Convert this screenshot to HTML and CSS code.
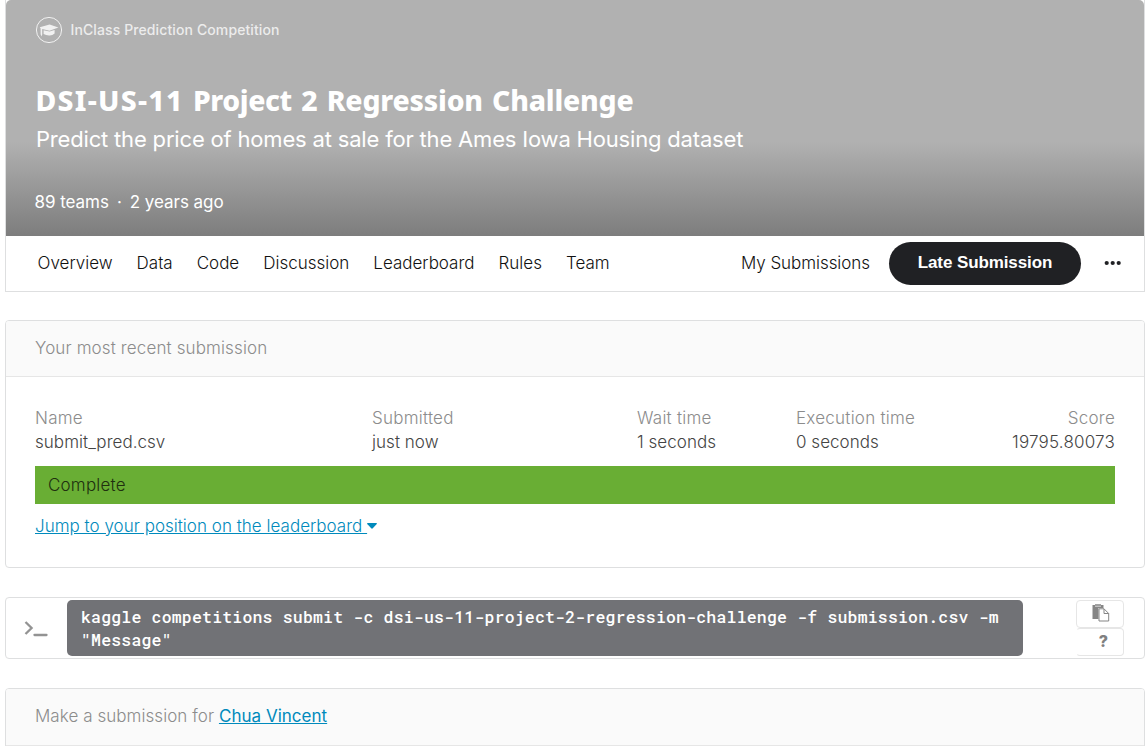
FILE: index.html
```html
<!DOCTYPE html>
<html lang="en">
<head>
<meta charset="utf-8">
<title>DSI-US-11 Project 2 Regression Challenge</title>
<link rel="stylesheet" href="styles.css">
</head>
<body>
<main class="page">
  <section class="competition">
    <header class="hero">
      <div class="kind">
        <svg class="kind-icon" width="28" height="28" viewBox="0 0 28 28"><circle cx="14" cy="14" r="12.6" fill="none" stroke="#f1f1f1"/><path fill="#f1f1f1" d="M14.6 8.4 23.4 11.5 14.5 14.7 7.2 13V18.5L6.6 20.6 5.6 18.2V12.4L4.8 11.2ZM8.6 14.2 14.5 15.5 19.6 13.9V17.4Q17.2 19.7 14 19.4 11 19.3 8.6 18Z"/></svg>
        <span class="kind-label">InClass Prediction Competition</span>
      </div>
      <h1 class="title"><span class="title-code">DSI-US-11</span> <span class="title-word">Project</span> 2 Regression Challenge</h1>
      <p class="subtitle">Predict the price of homes at sale for the Ames Iowa Housing dataset</p>
      <p class="meta"><span>89 teams</span><span class="dot">·</span><span>2 years ago</span></p>
    </header>
    <nav class="tabs">
      <a>Overview</a><a>Data</a><a>Code</a><a>Discussion</a><a>Leaderboard</a><a>Rules</a><a>Team</a>
      <a class="mine">My Submissions</a>
      <button class="late">Late Submission</button>
      <svg class="more" width="18" height="6" viewBox="0 0 18 6" fill="#202124"><circle cx="2.7" cy="3" r="2.1"/><circle cx="8.7" cy="3" r="2.1"/><circle cx="14.7" cy="3" r="2.1"/></svg>
    </nav>
  </section>

  <section class="card">
    <h2 class="card-head">Your most recent submission</h2>
    <div class="card-body">
      <dl class="facts">
        <div><dt>Name</dt><dd>submit_pred.csv</dd></div>
        <div><dt>Submitted</dt><dd>just now</dd></div>
        <div><dt>Wait time</dt><dd>1 seconds</dd></div>
        <div><dt>Execution time</dt><dd>0 seconds</dd></div>
        <div class="score"><dt>Score</dt><dd class="score-value">19795.80073</dd></div>
      </dl>
      <div class="status">Complete</div>
      <a class="jump"><span class="link">Jump to your position on the leaderboard </span><svg width="10" height="6" viewBox="0 0 10 6"><path fill="#008abc" d="M.6 0H9.4Q10.4.2 9.5 1.2L5.8 5.3Q5 6 4.2 5.3L.5 1.2Q-.4.2.6 0Z"/></svg></a>
    </div>
  </section>

  <section class="command">
    <svg class="prompt" width="24" height="18" viewBox="0 0 24 18" fill="none" stroke="#939393" stroke-width="2.3"><path d="M1.5 2 7.6 8 1.5 14"/><path stroke-linecap="round" d="M10.5 15H22.5"/></svg>
    <code class="code">kaggle competitions submit -c dsi-us-11-project-2-regression-challenge -f submission.csv -m<br>"Message"</code>
    <div class="tools">
      <button class="tool copy"><svg width="18" height="18" viewBox="0 0 18 18"><path fill="#858585" d="M.5 1H3V.3H9V1H11.5V4H6.5V15H.5Z"/><path fill="#fff" stroke="#858585" d="M7 4.8H12L16.7 9.5V17H7Z"/><path fill="none" stroke="#858585" d="M12 4.8V9.5H16.7"/><path stroke="#fff" stroke-width=".7" d="M3 2.2H9"/></svg></button>
      <button class="tool help">?</button>
    </div>
  </section>

  <section class="card last">
    <h2 class="card-head">Make a submission for <a class="user">Chua Vincent</a></h2>
  </section>
</main>
</body>
</html>
```
FILE: styles.css
```css
* { box-sizing: border-box; }
body { margin: 0; height: 746px; overflow: hidden; background: #fff; font: 300 16px/24px Inter, "Liberation Sans", sans-serif; }
h1, h2, p, dl, dd { margin: 0; font-weight: inherit; }
button { padding: 0; border: 0; background: none; font: inherit; }
.page { width: 1140px; margin-left: 5px; }
.competition { height: 292px; border: 1px solid #dedfe0; border-top: 0; }
.hero { height: 236px; padding: 16px 30px 0 29px; border-radius: 5px 5px 0 0; color: #fff; background: linear-gradient(#b1b1b1 0 142px, #7d7d7d 236px); }
.kind { display: flex; align-items: center; gap: 8px; height: 28px; }
.kind-label { margin-left: -.5px; color: #ececec; font-size: 14px; font-weight: 500; letter-spacing: .11px; }
.title { margin-top: 36px; margin-left: .5px; font: 800 28.4px/40px "Noto Sans", sans-serif; letter-spacing: -.2px; word-spacing: 2.1px; white-space: nowrap; }
.title-code { letter-spacing: 1.25px; }
.title-word { letter-spacing: -.4px; }
.subtitle { margin: 5px 0 0 1px; font-size: 22px; line-height: 28px; font-weight: 400; letter-spacing: -.18px; white-space: nowrap; }
.meta { display: flex; gap: 8px; margin: 37px 0 0 -.5px; font-size: 17px; font-weight: 400; letter-spacing: -.04px; }
.tabs { display: flex; align-items: center; height: 55px; padding: 0 22px 1px 31.5px; gap: 24px; color: #111; font-size: 17px; }
.mine { margin-left: auto; letter-spacing: -.05px; }
.late { width: 192px; height: 43px; margin-left: -5px; border-radius: 22px; background: #202124; color: #fff; font: bold 17px/40px "Liberation Sans", sans-serif; letter-spacing: -.1px; padding-bottom: 1px; }
.more { margin-left: -1px; }
.card { height: 248px; margin-top: 28px; border: 1px solid #dedfe0; border-radius: 4px; overflow: hidden; }
.card-head { height: 56px; padding-left: 29px; border-bottom: 1px solid #e6e6e6; background: #fafafa; color: #8c8c8c; font-size: 17px; line-height: 55px; letter-spacing: .13px; }
.card-body { padding: 29px 29px 0; }
.facts { display: grid; grid-template-columns: 337px 265px 159px 1fr 110px; height: 60px; font-size: 17px; }
dt { color: #8c8c8c; letter-spacing: .24px; }
dd { color: #444; letter-spacing: .04px; }
.score { text-align: right; }
.score-value { letter-spacing: .2px; }
.status { height: 38px; padding-left: 13px; background: #69ae34; color: #20300f; font-size: 17px; line-height: 38px; letter-spacing: .2px; }
.jump { display: flex; align-items: center; margin-top: 10px; font-size: 17px; color: #008abc; white-space: pre; letter-spacing: .02px; }
.link, .user { text-decoration: underline; }
.command { display: flex; height: 62px; margin-top: 29px; padding: 2px 20px 2px 18px; border: 1px solid #dedfe0; border-radius: 4px; }
.prompt { margin-top: 20px; }
.code { width: 956px; height: 56px; margin-left: 19px; padding: 5px 14px; border-radius: 5px; background: #717276; color: #fff; font: 500 16.5px/23px "Roboto Mono", "Liberation Mono", monospace; letter-spacing: .185px; white-space: nowrap; }
.tools { width: 48px; margin-left: auto; }
.tool { display: flex; align-items: center; justify-content: center; width: 48px; height: 28px; border: 1px solid #e6e6e6; border-radius: 4px; }
.copy { padding: 0 0 2px 1px; }
.help { border-left-color: transparent; padding: 0 0 2px 7px; color: #808080; font-size: 16px; font-weight: 800; }
.last { margin-top: 29px; height: 80px; }
.last .card-head { height: 57px; letter-spacing: .06px; }
.user { color: #008abc; font-weight: 400; letter-spacing: .02px; }
```
